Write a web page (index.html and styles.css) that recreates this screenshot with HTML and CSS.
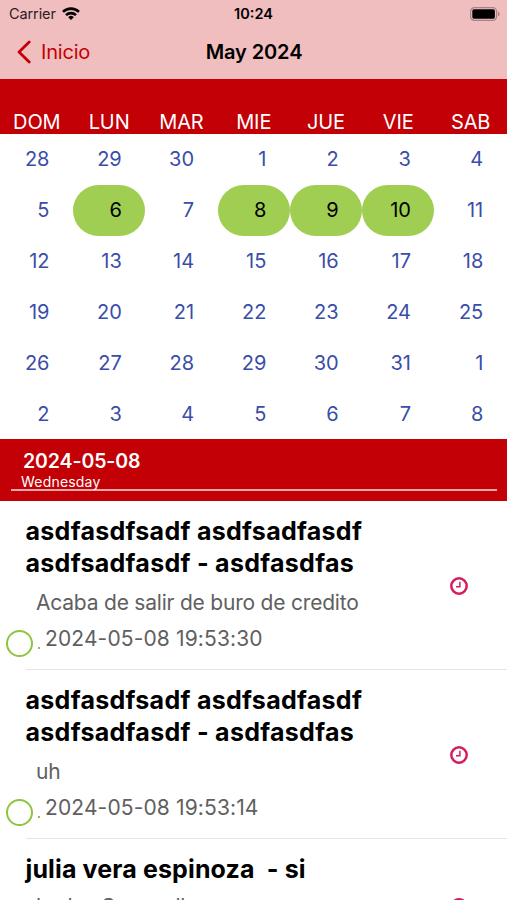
FILE: index.html
```html
<!doctype html>
<html lang="es">
  <head>
    <meta charset="utf-8" />
    <meta name="viewport" content="width=device-width, initial-scale=1" />
    <title>May 2024</title>
    <link rel="stylesheet" href="styles.css" />
  </head>
  <body>
    <div class="screen">
      <header class="top">
        <div class="status-bar">
          <div class="carrier">
            <span>Carrier</span>
            <svg class="wifi" viewBox="0 0 18 13" fill="none" stroke="currentColor" stroke-width="2.6">
              <path d="M1 4.9a11.5 11.5 0 0 1 16 0" />
              <path d="M4 8.1a7.2 7.2 0 0 1 10 0" />
              <path d="M9 13L6.2 10.2a4 4 0 0 1 5.6 0z" fill="currentColor" stroke="none" />
            </svg>
          </div>
          <div class="time">10:24</div>
          <svg class="battery" viewBox="0 0 30 14">
            <rect x="0.6" y="0.6" width="26" height="12.8" rx="4" fill="none" stroke="#a88386" stroke-width="1.2" />
            <rect x="2.3" y="2.3" width="22.6" height="9.4" rx="1.6" fill="#000" />
            <path d="M28 4.6c2.2.8 2.2 4 0 4.8z" fill="#a88386" />
          </svg>
        </div>
        <nav class="nav">
          <a class="back" href="#">
            <svg class="chevron" viewBox="0 0 14 24" fill="none" stroke="currentColor" stroke-width="2.8" stroke-linecap="round" stroke-linejoin="round">
              <path d="M12.2 2L2 12l10.2 10" />
            </svg>
            <span>Inicio</span>
          </a>
          <h1>May 2024</h1>
        </nav>
      </header>

      <div class="weekdays">
        <span>DOM</span><span>LUN</span><span>MAR</span><span>MIE</span><span>JUE</span><span>VIE</span><span>SAB</span>
      </div>

      <div class="days">
        <span>28</span><span>29</span><span>30</span><span>1</span><span>2</span><span>3</span><span>4</span>
        <span>5</span><span class="marked">6</span><span>7</span><span class="marked">8</span><span class="marked">9</span><span class="marked">10</span><span>11</span>
        <span>12</span><span>13</span><span>14</span><span>15</span><span>16</span><span>17</span><span>18</span>
        <span>19</span><span>20</span><span>21</span><span>22</span><span>23</span><span>24</span><span>25</span>
        <span>26</span><span>27</span><span>28</span><span>29</span><span>30</span><span>31</span><span>1</span>
        <span>2</span><span>3</span><span>4</span><span>5</span><span>6</span><span>7</span><span>8</span>
      </div>

      <div class="selected-day">
        <div class="selected-date">2024-05-08</div>
        <div class="selected-name">Wednesday</div>
      </div>

      <ul class="events">
        <li class="event">
          <div class="event-body">
            <h2>asdfasdfsadf asdfsadfasdf<br />asdfsadfasdf - asdfasdfas</h2>
            <p class="note">Acaba de salir de buro de credito</p>
            <div class="when"><i class="ring"></i><i class="dot"></i><span>2024-05-08 19:53:30</span></div>
          </div>
          <svg class="clock" viewBox="0 0 18 18" fill="none" stroke="currentColor">
            <circle cx="9" cy="9" r="7.7" stroke-width="2.5" />
            <path d="M9.9 4.8v4.9H6" stroke-width="1.5" />
          </svg>
        </li>
        <li class="event">
          <div class="event-body">
            <h2>asdfasdfsadf asdfsadfasdf<br />asdfsadfasdf - asdfasdfas</h2>
            <p class="note">uh</p>
            <div class="when"><i class="ring"></i><i class="dot"></i><span>2024-05-08 19:53:14</span></div>
          </div>
          <svg class="clock" viewBox="0 0 18 18" fill="none" stroke="currentColor">
            <circle cx="9" cy="9" r="7.7" stroke-width="2.5" />
            <path d="M9.9 4.8v4.9H6" stroke-width="1.5" />
          </svg>
        </li>
        <li class="event event-short">
          <div class="event-body">
            <h2>julia vera espinoza&nbsp; - si</h2>
            <p class="note">hadas Gomez llama</p>
          </div>
          <svg class="clock" viewBox="0 0 18 18" fill="none" stroke="currentColor">
            <circle cx="9" cy="9" r="7.7" stroke-width="2.5" />
            <path d="M9.9 4.8v4.9H6" stroke-width="1.5" />
          </svg>
        </li>
      </ul>
    </div>
  </body>
</html>
```
FILE: styles.css
```css
:root {
  --red: #c20006;
  --bar: #f1bebf;
  --blue: #3a4da8;
  --green: #9fce52;
  --pink: #d81b60;
}

* {
  box-sizing: border-box;
}

body {
  margin: 0;
  font-family: Inter, 'Liberation Sans', sans-serif;
  background: #fff;
  color: #000;
}

.screen {
  height: 900px;
  overflow: hidden;
}

/* Header */
.top {
  height: 79px;
  background: var(--bar);
}

.status-bar {
  display: grid;
  grid-template-columns: 1fr auto 1fr;
  align-items: center;
  height: 27px;
  padding: 0 7px 0 9px;
  font-size: 14.5px;
}

.carrier {
  display: flex;
  align-items: center;
  gap: 6px;
  color: #2c2022;
  letter-spacing: -0.1px;
}

.wifi {
  width: 18px;
  height: 13px;
  color: #000;
}

.time {
  padding-right: 2px;
  font-weight: 600;
}

.battery {
  justify-self: end;
  width: 30px;
  height: 14px;
}

.nav {
  display: grid;
  grid-template-columns: 1fr auto 1fr;
  align-items: center;
  height: 50px;
  padding: 0 16px 0 17px;
}

.back {
  display: flex;
  align-items: center;
  gap: 10px;
  color: var(--red);
  font-size: 20px;
  letter-spacing: -0.2px;
  text-decoration: none;
}

.chevron {
  width: 14px;
  height: 24px;
}

.nav h1 {
  margin: 0;
  font-size: 20px;
  font-weight: 600;
  letter-spacing: -0.1px;
}

/* Calendar */
.weekdays {
  display: grid;
  grid-template-columns: repeat(7, 72.3px);
  align-items: end;
  height: 54.5px;
  padding-left: 0.7px;
  background: var(--red);
  color: #fff;
  font-size: 20px;
  line-height: 23px;
  letter-spacing: -0.1px;
  text-align: center;
}

.days {
  display: grid;
  grid-template-columns: repeat(7, 72.3px);
  grid-auto-rows: 51px;
  height: 305.5px;
  padding-left: 0.7px;
  color: var(--blue);
  font-size: 20px;
  line-height: 51px;
  text-align: right;
}

.days span {
  padding-right: 23.5px;
}

.days .marked {
  background: var(--green);
  border-radius: 26px;
  color: #000;
}

/* Selected day */
.selected-day {
  height: 62px;
  padding: 10px 10px 0 11px;
  background: var(--red);
  color: #fff;
}

.selected-date {
  padding-left: 12px;
  font-size: 19.5px;
  font-weight: 600;
  line-height: 24px;
  letter-spacing: -0.1px;
}

.selected-name {
  height: 18px;
  padding-left: 10px;
  border-bottom: 2px solid #f3a9ab;
  font-size: 14px;
  line-height: 17px;
  letter-spacing: 0.2px;
}

/* Events */
.events {
  margin: 0;
  padding: 0;
  list-style: none;
}

.event {
  display: flex;
  align-items: flex-start;
  justify-content: space-between;
  height: 169px;
  margin-left: 26px;
  padding: 14px 39px 0 0;
  border-bottom: 1px solid #e4e4e4;
}

.event h2 {
  margin: 0 0 0 -0.5px;
  font-size: 25px;
  font-weight: 700;
  line-height: 32px;
  letter-spacing: 0.29px;
}

.note {
  margin: 9px 0 0 10px;
  color: #606060;
  font-size: 21px;
  line-height: 30px;
  letter-spacing: -0.21px;
}

.when {
  display: flex;
  align-items: center;
  margin: 3px 0 0 -20px;
  color: #606060;
  font-size: 21px;
  line-height: 32px;
  letter-spacing: 0.13px;
}

.ring {
  width: 27px;
  height: 27px;
  margin-top: 9px;
  border: 2px solid #8cc63f;
  border-radius: 50%;
}

.dot {
  width: 2px;
  height: 2px;
  margin: 18px 5px 0 5px;
  background: #8cc63f;
}

.clock {
  flex: none;
  width: 18px;
  height: 18px;
  margin-top: 62px;
  color: var(--pink);
}

/* Event with a single-line title */
.event-short {
  height: 137px;
}

.event-short h2 {
  letter-spacing: 0.13px;
}

.event-short .note {
  margin-top: 7px;
}

.event-short .clock {
  margin-top: 45px;
}
```
